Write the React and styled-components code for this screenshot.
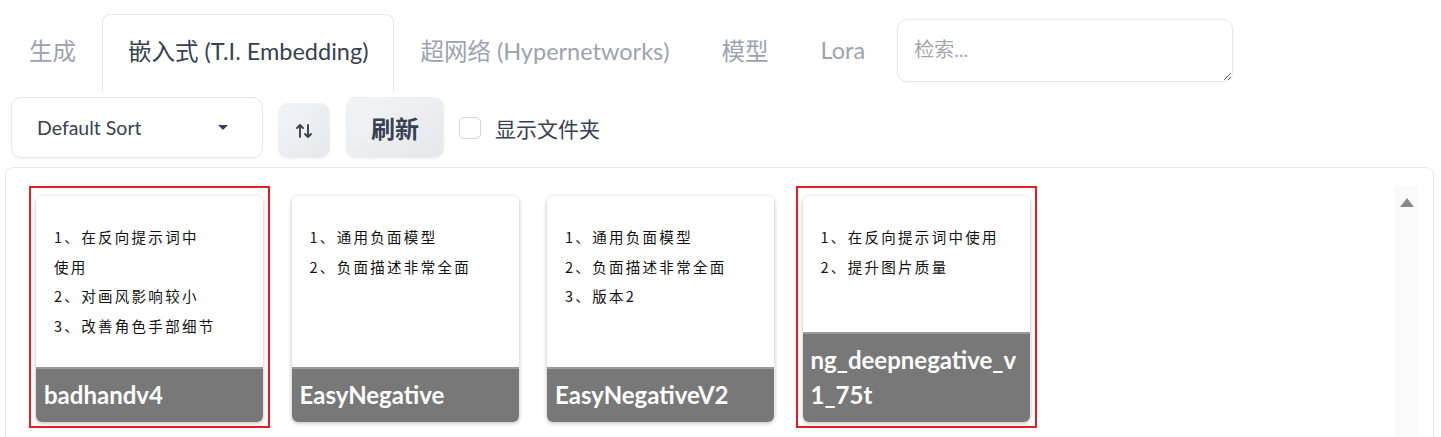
import React from 'react';
import styled, { createGlobalStyle } from 'styled-components';

const GlobalStyle = createGlobalStyle`
  body {
    margin: 0;
    background: #fff;
    font-family: Lato, "Noto Sans CJK SC", sans-serif;
    color: #374151;
  }
`;

const Page = styled.div`
  padding: 14px 7px 0 3px;
`;

const TopRow = styled.div`
  display: flex;
  align-items: flex-start;
`;

const TabList = styled.div`
  display: flex;
`;

const Tab = styled.div`
  height: 78px;
  padding: 0 25px 8px;
  display: flex;
  align-items: center;
  font-size: 23.5px;
  color: ${p => (p.$active ? '#374151' : '#9ca3af')};
  border: 1px solid ${p => (p.$active ? '#e5e7eb' : 'transparent')};
  border-bottom: none;
  border-radius: 8px 8px 0 0;
  box-sizing: border-box;
  white-space: nowrap;
`;

const Search = styled.textarea`
  margin: 5px 0 0 6px;
  width: 336px;
  height: 63px;
  box-sizing: border-box;
  border: 1px solid #e5e7eb;
  border-radius: 10px;
  padding: 14px 16px;
  font-family: Lato, "Noto Sans CJK SC", sans-serif;
  font-size: 20px;
  color: #374151;
  box-shadow: 0 1px 2px rgba(0, 0, 0, 0.04);
  &::placeholder {
    color: #a3a8b0;
  }
`;

const Controls = styled.div`
  display: flex;
  align-items: center;
  margin-top: 5px;
  padding-left: 8px;
`;

const Dropdown = styled.div`
  width: 252px;
  height: 61px;
  box-sizing: border-box;
  border: 1px solid #e5e7eb;
  border-radius: 10px;
  display: flex;
  align-items: center;
  justify-content: space-between;
  padding: 0 34px 0 25px;
  font-size: 19.5px;
  color: #374151;
  box-shadow: 0 1px 2px rgba(0, 0, 0, 0.04);
`;

const Caret = styled.span`
  width: 0;
  height: 0;
  border-left: 5px solid transparent;
  border-right: 5px solid transparent;
  border-top: 5px solid #374151;
`;

const GrayButton = styled.button`
  height: ${p => p.$h}px;
  width: ${p => p.$w}px;
  align-self: flex-end;
  margin-left: ${p => p.$ml}px;
  border: 1px solid #eceef1;
  border-radius: 10px;
  background: linear-gradient(to bottom right, #f3f4f6, #e5e7eb);
  color: #374151;
  font-family: Lato, "Noto Sans CJK SC", sans-serif;
  font-size: 24px;
  font-weight: 700;
  display: flex;
  align-items: center;
  justify-content: center;
  padding: 0;
  box-shadow: 0 1px 2px rgba(0, 0, 0, 0.06);
`;

const CheckLabel = styled.label`
  display: flex;
  align-items: center;
  margin-left: 15px;
  font-size: 21px;
  color: #374151;
  gap: 14px;
`;

const Box = styled.span`
  width: 22px;
  height: 22px;
  box-sizing: border-box;
  border: 1px solid #d1d5db;
  border-radius: 5px;
  background: #fff;
`;

const Panel = styled.div`
  margin: 9px 0 0 2px;
  min-height: 290px;
  border: 1px solid #e5e7eb;
  border-radius: 8px 8px 0 0;
  display: flex;
  padding: 18px 14px 0 23px;
`;

const Grid = styled.div`
  flex: 1;
  display: flex;
  gap: 14.5px;
  align-items: flex-start;
`;

const Frame = styled.div`
  border: 2px solid ${p => (p.$marked ? '#e0201f' : 'transparent')};
  padding: 8px 5px 4px 5px;
  flex-shrink: 0;
`;

const Card = styled.div`
  width: 227px;
  height: 226px;
  border-radius: 6px;
  overflow: hidden;
  display: flex;
  flex-direction: column;
  box-shadow: 0 1px 4px rgba(0, 0, 0, 0.28);
`;

const CardBody = styled.div`
  flex: 1;
  background: #fff;
  padding: 26px 10px 0 18px;
  font-family: "Noto Sans CJK SC", sans-serif;
  font-size: 14.5px;
  line-height: 29.7px;
  letter-spacing: 2.3px;
  color: #111;
`;

const CardTitle = styled.div`
  background: #787878;
  border-top: 2px solid #9a9a9a;
  color: #fff;
  font-family: Lato, sans-serif;
  font-weight: 700;
  font-size: 24px;
  line-height: 35px;
  padding: 8px 8px 10px;
  word-break: break-all;
`;

const ScrollTrack = styled.div`
  width: 24px;
  background: #fafafa;
  display: flex;
  justify-content: center;
  padding-top: 12px;
  margin-left: 8px;
`;

const ArrowUp = styled.span`
  width: 0;
  height: 0;
  border-left: 7px solid transparent;
  border-right: 7px solid transparent;
  border-bottom: 9px solid #8a8a8a;
`;

const tabs = ['生成', '嵌入式 (T.I. Embedding)', '超网络 (Hypernetworks)', '模型', 'Lora'];

const cards = [
  { name: 'badhandv4', marked: true, lines: ['1、在反向提示词中', '使用', '2、对画风影响较小', '3、改善角色手部细节'] },
  { name: 'EasyNegative', lines: ['1、通用负面模型', '2、负面描述非常全面'] },
  { name: 'EasyNegativeV2', lines: ['1、通用负面模型', '2、负面描述非常全面', '3、版本2'] },
  { name: 'ng_deepnegative_v1_75t', marked: true, lines: ['1、在反向提示词中使用', '2、提升图片质量'] },
];

function SortIcon() {
  return (
    <svg width="18" height="20" viewBox="0 0 18 20" fill="none" stroke="#374151" strokeWidth="1.9" strokeLinecap="round" strokeLinejoin="round">
      <path d="M5 16V4M2 7l3-3 3 3" />
      <path d="M13 4v12M10 13l3 3 3-3" />
    </svg>
  );
}

export default function App() {
  return (
    <Page>
      <GlobalStyle />
      <TopRow>
        <TabList>
          {tabs.map((t, i) => (
            <Tab key={t} $active={i === 1}>{t}</Tab>
          ))}
        </TabList>
        <Search placeholder="检索..." />
      </TopRow>
      <Controls>
        <Dropdown>
          Default Sort
          <Caret />
        </Dropdown>
        <GrayButton $w={52} $h={55} $ml={15}>
          <SortIcon />
        </GrayButton>
        <GrayButton $w={98} $h={61} $ml={16}>刷新</GrayButton>
        <CheckLabel>
          <Box />
          显示文件夹
        </CheckLabel>
      </Controls>
      <Panel>
        <Grid>
          {cards.map(c => (
            <Frame key={c.name} $marked={c.marked}>
              <Card>
                <CardBody>
                  {c.lines.map(l => (
                    <div key={l}>{l}</div>
                  ))}
                </CardBody>
                <CardTitle>{c.name}</CardTitle>
              </Card>
            </Frame>
          ))}
        </Grid>
        <ScrollTrack>
          <ArrowUp />
        </ScrollTrack>
      </Panel>
    </Page>
  );
}
